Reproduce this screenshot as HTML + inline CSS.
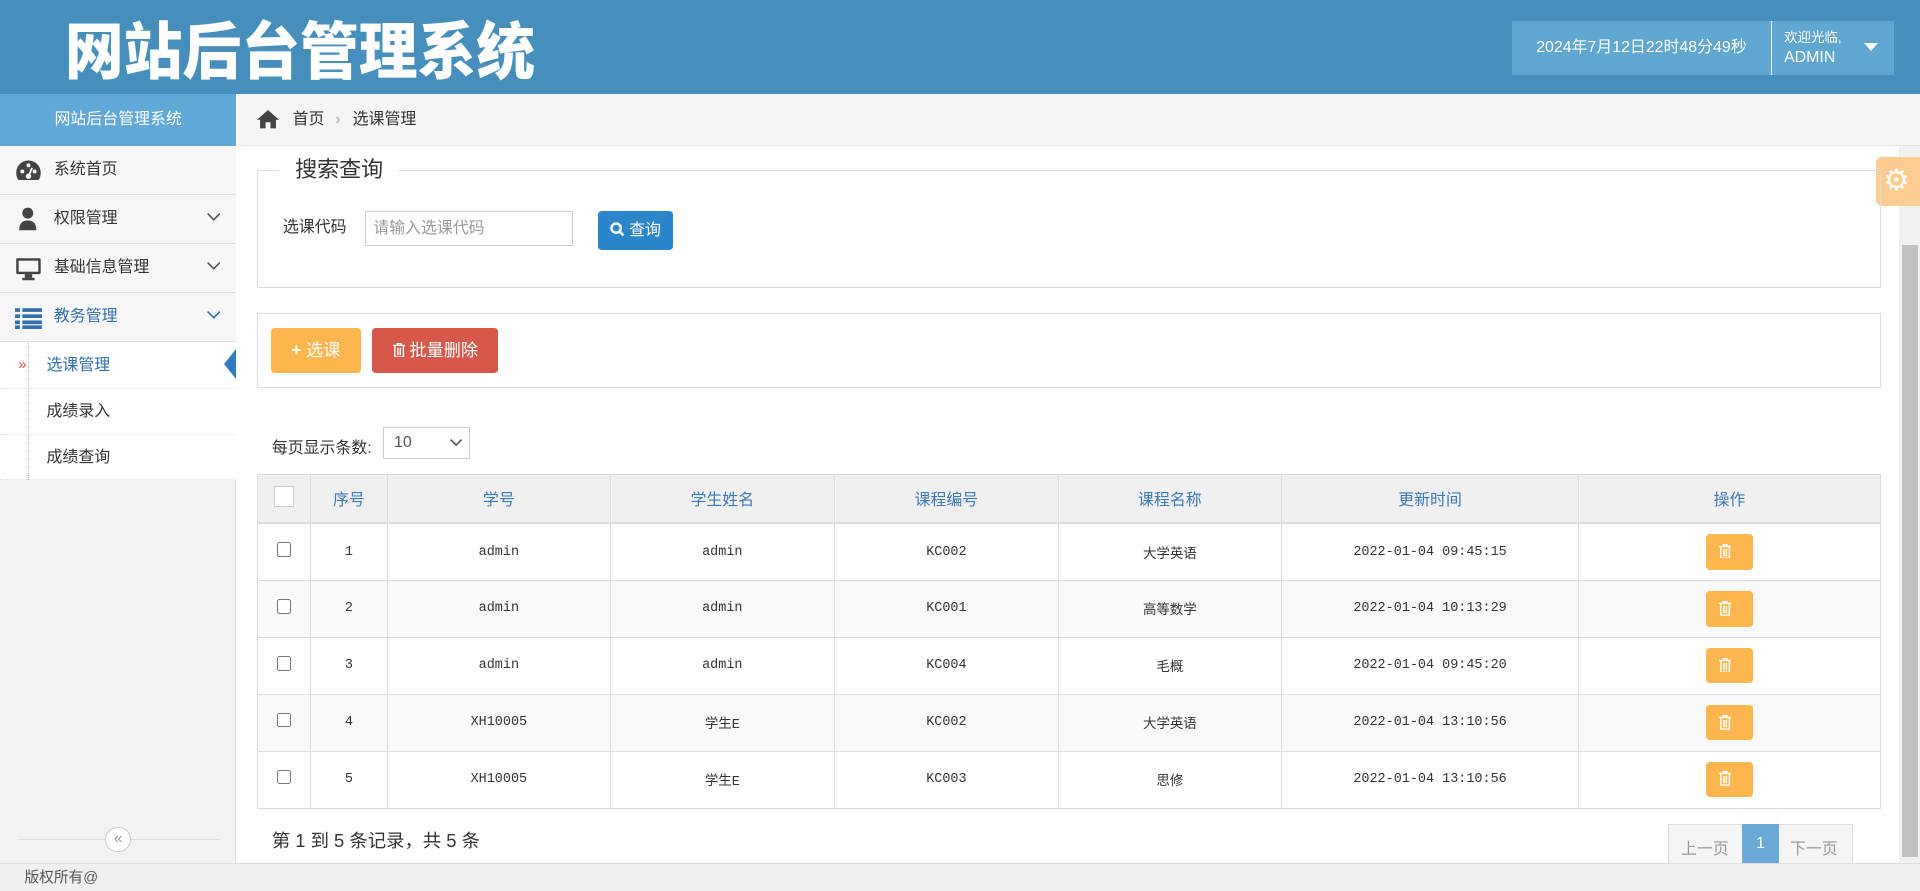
<!DOCTYPE html>
<html><head><meta charset="utf-8">
<style>
*{box-sizing:border-box;margin:0;padding:0}
html,body{width:1920px;height:891px;overflow:hidden;background:#fff}
#w{zoom:1.22449;width:1568px;height:728px;position:relative;font-family:"Liberation Sans","Noto Sans CJK SC",sans-serif;font-size:13px;color:#333}
.a{position:absolute}
.hdr{left:0;top:0;width:1568px;height:77px;background:#468fbc}
.ttl{left:53px;top:3px;font-family:"Noto Sans CJK SC",sans-serif;font-weight:900;font-size:48px;line-height:70px;color:#fff;letter-spacing:0px;transform:scaleY(1.05)}
.rb{left:1235px;top:17px;width:312px;height:44px;background:#5fa6d1;color:#fff}
.side{left:0;top:77px;width:193px;height:628px;background:#f2f2f2;border-right:1px solid #e2e2e2}
.sh{left:0;top:0;width:193px;height:42px;background:#60a8d6;color:#fff;text-align:center;line-height:42px;font-size:13px}
.mi{left:0;width:193px;height:40px;border-bottom:1px solid #e0e0e0;background:#f7f7f7;line-height:40px;padding-left:44px;font-size:13px;color:#333}
.mi svg{position:absolute;right:13px;top:15px}
.sub{left:0;width:193px;border-bottom:1px dotted #ddd;padding-left:38px;font-size:13px;color:#333}
.main{left:194px;top:77px;width:1374px;height:628px;background:#fff}
.bc{left:0;top:0;width:1374px;height:42px;background:#f5f5f5;border-bottom:1px solid #e5e5e5;line-height:42px;font-size:13px}
.box{border:1px solid #ddd}
.btn{color:#fff;border-radius:3px;text-align:center;font-size:13px}
table{border-collapse:collapse;position:absolute;left:210px;top:387px;width:1326px;table-layout:fixed}
td,th{border:1px solid #ddd;text-align:center;font-size:12px}
th{background:#f0f0f0;color:#3a78b6;font-weight:normal;height:40px;font-size:13px;border-bottom:2px solid #ddd}
td{height:46.5px;font-family:"Liberation Mono","Noto Sans CJK SC",monospace;font-size:11px;color:#333}
tr:nth-child(odd) td{background:#f9f9f9}
.cb{display:inline-block;width:12px;height:12px;border:1px solid #777;border-radius:2px;background:#fff}
.del{display:inline-block;width:38px;height:29px;background:#fdb54e;border-radius:3px;vertical-align:middle;position:relative}
.foot{left:0;top:705px;width:1568px;height:23px;background:#f0f0f0;border-top:1px solid #ddd;padding-left:20px;line-height:23px;font-size:12px;color:#555}
</style></head><body><div id="w">
<div class="a hdr"></div>
<div class="a ttl">网站后台管理系统</div>
<div class="a rb">
 <div class="a" style="left:0;top:0;width:211px;height:44px;line-height:44px;text-align:center;font-size:13px">2024年7月12日22时48分49秒</div>
 <div class="a" style="left:211px;top:0;width:1px;height:44px;background:#fff"></div>
 <div class="a" style="left:222px;top:4px;font-size:11px">欢迎光临,</div>
 <div class="a" style="left:222px;top:23px;font-size:13px">ADMIN</div>
 <div class="a" style="left:287px;top:18px;width:0;height:0;border-left:6px solid transparent;border-right:6px solid transparent;border-top:7px solid #fff"></div>
</div>

<div class="a side">
 <div class="a sh">网站后台管理系统</div>
 <div class="a mi" style="top:42px">系统首页</div>
 <div class="a mi" style="top:82px">权限管理<svg width="11" height="7" viewBox="0 0 11 7"><path d="M0.5 0.5L5.5 5.5L10.5 0.5" stroke="#555" stroke-width="1.3" fill="none"/></svg></div>
 <div class="a mi" style="top:122px">基础信息管理<svg width="11" height="7" viewBox="0 0 11 7"><path d="M0.5 0.5L5.5 5.5L10.5 0.5" stroke="#555" stroke-width="1.3" fill="none"/></svg></div>
 <div class="a mi" style="top:162px;color:#2f6fad">教务管理<svg width="11" height="7" viewBox="0 0 11 7"><path d="M0.5 0.5L5.5 5.5L10.5 0.5" stroke="#2f6fad" stroke-width="1.3" fill="none"/></svg></div>
 <svg class="a" style="left:12px;top:52px" width="22" height="20" viewBox="0 0 22 20"><path d="M11 2A10 10 0 0 0 1 12c0 3 1 5 2 6h16c1-1 2-3 2-6A10 10 0 0 0 11 2z" fill="#444"/><circle cx="6" cy="11" r="1.6" fill="#f7f7f7"/><circle cx="11" cy="6" r="1.6" fill="#f7f7f7"/><circle cx="16" cy="11" r="1.6" fill="#f7f7f7"/><circle cx="11" cy="15" r="2.2" fill="#f7f7f7"/><path d="M11 15L14 8" stroke="#f7f7f7" stroke-width="1.5"/></svg>
 <svg class="a" style="left:15px;top:92px" width="16" height="20" viewBox="0 0 16 20"><circle cx="8" cy="5" r="4.5" fill="#444"/><path d="M1 19c0-6 3-8 7-8s7 2 7 8z" fill="#444"/></svg>
 <svg class="a" style="left:12px;top:133px" width="22" height="20" viewBox="0 0 22 20"><rect x="1" y="1" width="20" height="13" rx="1" fill="#444"/><rect x="3" y="3" width="16" height="9" fill="#f7f7f7"/><rect x="8" y="14" width="6" height="3" fill="#444"/><rect x="6" y="17" width="10" height="2" fill="#444"/></svg>
 <svg class="a" style="left:12px;top:174px" width="22" height="18" viewBox="0 0 22 18"><g fill="#2f6fad"><rect x="0" y="1" width="4" height="3"/><rect x="6" y="1" width="16" height="3"/><rect x="0" y="6" width="4" height="3"/><rect x="6" y="6" width="16" height="3"/><rect x="0" y="11" width="4" height="3"/><rect x="6" y="11" width="16" height="3"/><rect x="0" y="15" width="4" height="3"/><rect x="6" y="15" width="16" height="3"/></g></svg>
 <div class="a" style="left:0;top:202px;width:193px;height:113px;background:#fff"></div>
 <div class="a" style="left:23px;top:203px;height:112px;border-left:1px dotted #bbb"></div>
 <div class="a sub" style="top:202px;height:39px;line-height:39px;color:#2f6fad">选课管理</div>
 <div class="a" style="left:15px;top:202px;line-height:39px;color:#d9534f;font-size:12px">»</div>
 <div class="a" style="left:183px;top:208px;width:0;height:0;border-top:13px solid transparent;border-bottom:13px solid transparent;border-right:10px solid #2f7cc0"></div>
 <div class="a sub" style="top:241px;height:37px;line-height:37px">成绩录入</div>
 <div class="a sub" style="top:278px;height:37px;line-height:37px">成绩查询</div>
 <div class="a" style="left:14px;top:608px;width:165px;height:1px;background:#ddd"></div>
 <div class="a" style="left:86px;top:598px;width:21px;height:21px;border-radius:50%;border:1px solid #ccc;background:#fff;text-align:center;line-height:18px;color:#999;font-size:13px">«</div>
</div>

<div class="a main">
 <div class="a bc">
  <svg class="a" style="left:16px;top:13px" width="18" height="15" viewBox="0 0 18 15"><path d="M9 0L0 8h2.5v7h4.5v-5h4v5h4.5V8H18z" fill="#444"/></svg>
  <span class="a" style="left:45px;top:0">首页</span>
  <span class="a" style="left:80px;top:0;color:#aaa">›</span>
  <span class="a" style="left:94px;top:0">选课管理</span>
 </div>
</div>

<div class="a" style="left:1551px;top:119px;width:17px;height:586px;background:#f1f1f1"></div>
<div class="a" style="left:1553px;top:200px;width:13px;height:500px;background:#c1c1c1"></div>
<div class="a" style="left:1532px;top:128px;width:36px;height:40px;background:#fcc98a;border-radius:5px 0 0 5px;opacity:.95"></div>
<div class="a" style="left:1538px;top:133px;color:#fff;font-size:24px;line-height:30px">⚙</div>

<div class="a box" style="left:210px;top:139px;width:1326px;height:96px"></div>
<div class="a" style="left:228px;top:128px;padding:0 13px;background:#fff;font-size:18px;line-height:22px;color:#333">搜索查询</div>
<div class="a" style="left:231px;top:178px;font-size:13px;line-height:16px">选课代码</div>
<div class="a" style="left:298px;top:172px;width:170px;height:29px;border:1px solid #ccc;padding-left:6px;line-height:27px;color:#999;font-size:13px">请输入选课代码</div>
<div class="a btn" style="left:488px;top:172px;width:62px;height:32px;background:#2a86c9;line-height:32px">
 <svg style="vertical-align:-2px" width="12" height="12" viewBox="0 0 12 12"><circle cx="5" cy="5" r="3.8" stroke="#fff" stroke-width="2" fill="none"/><path d="M7.5 7.5L11 11" stroke="#fff" stroke-width="2.2"/></svg> 查询</div>

<div class="a box" style="left:210px;top:256px;width:1326px;height:61px"></div>
<div class="a btn" style="left:221px;top:268px;width:74px;height:37px;background:#fdb54e;line-height:37px;font-size:14px"><b>+</b> 选课</div>
<div class="a btn" style="left:304px;top:268px;width:103px;height:37px;background:#d5584a;line-height:37px;font-size:14px">
 <svg style="vertical-align:-1px" width="10" height="12" viewBox="0 0 10 12"><path d="M0 2h10M3.5 2V0.5h3V2M1.5 2.5v9h7v-9M4 4v6M6 4v6" stroke="#fff" stroke-width="1.2" fill="none"/></svg> 批量删除</div>

<div class="a" style="left:222px;top:355px;font-size:13px">每页显示条数:</div>
<div class="a" style="left:313px;top:349px;width:71px;height:26px;border:1px solid #ccc;line-height:24px;padding-left:8px;color:#555">10<svg class="a" style="right:6px;top:9px" width="10" height="6" viewBox="0 0 10 6"><path d="M0.5 0.5L5 5L9.5 0.5" stroke="#555" stroke-width="1.3" fill="none"/></svg></div>

<table>
<colgroup><col style="width:43px"><col style="width:63px"><col style="width:182px"><col style="width:183px"><col style="width:183px"><col style="width:182px"><col style="width:243px"><col></colgroup>
<tr><th><span class="cb" style="width:17px;height:17px;border-color:#ccc;border-radius:0"></span></th><th>序号</th><th>学号</th><th>学生姓名</th><th>课程编号</th><th>课程名称</th><th>更新时间</th><th>操作</th></tr>
<tr><td><span class="cb"></span></td><td>1</td><td>admin</td><td>admin</td><td>KC002</td><td>大学英语</td><td>2022-01-04 09:45:15</td><td><span class="del"></span></td></tr>
<tr><td><span class="cb"></span></td><td>2</td><td>admin</td><td>admin</td><td>KC001</td><td>高等数学</td><td>2022-01-04 10:13:29</td><td><span class="del"></span></td></tr>
<tr><td><span class="cb"></span></td><td>3</td><td>admin</td><td>admin</td><td>KC004</td><td>毛概</td><td>2022-01-04 09:45:20</td><td><span class="del"></span></td></tr>
<tr><td><span class="cb"></span></td><td>4</td><td>XH10005</td><td>学生E</td><td>KC002</td><td>大学英语</td><td>2022-01-04 13:10:56</td><td><span class="del"></span></td></tr>
<tr><td><span class="cb"></span></td><td>5</td><td>XH10005</td><td>学生E</td><td>KC003</td><td>思修</td><td>2022-01-04 13:10:56</td><td><span class="del"></span></td></tr>
</table>
<svg class="a" style="left:1404px;top:444px" width="10" height="12" viewBox="0 0 10 12"><path d="M0 2h10M3.5 2V0.5h3V2M1.5 2.5v9h7v-9M4 4v6M6 4v6" stroke="#fff" stroke-width="1.2" fill="none"/></svg>
<svg class="a" style="left:1404px;top:491px" width="10" height="12" viewBox="0 0 10 12"><path d="M0 2h10M3.5 2V0.5h3V2M1.5 2.5v9h7v-9M4 4v6M6 4v6" stroke="#fff" stroke-width="1.2" fill="none"/></svg>
<svg class="a" style="left:1404px;top:537px" width="10" height="12" viewBox="0 0 10 12"><path d="M0 2h10M3.5 2V0.5h3V2M1.5 2.5v9h7v-9M4 4v6M6 4v6" stroke="#fff" stroke-width="1.2" fill="none"/></svg>
<svg class="a" style="left:1404px;top:584px" width="10" height="12" viewBox="0 0 10 12"><path d="M0 2h10M3.5 2V0.5h3V2M1.5 2.5v9h7v-9M4 4v6M6 4v6" stroke="#fff" stroke-width="1.2" fill="none"/></svg>
<svg class="a" style="left:1404px;top:630px" width="10" height="12" viewBox="0 0 10 12"><path d="M0 2h10M3.5 2V0.5h3V2M1.5 2.5v9h7v-9M4 4v6M6 4v6" stroke="#fff" stroke-width="1.2" fill="none"/></svg>

<div class="a" style="left:222px;top:675px;font-size:15px;color:#333">第 1 到 5 条记录，共 5 条</div>
<div class="a" style="left:1362px;top:673px;width:151px;height:33px;border:1px solid #ddd;background:#f5f5f5;font-size:13px;color:#999">
 <span class="a" style="left:10px;top:9px">上一页</span>
 <span class="a" style="left:60px;top:-1px;width:30px;height:33px;background:#6aa9d6;color:#fff;text-align:center;line-height:33px">1</span>
 <span class="a" style="left:99px;top:9px">下一页</span>
</div>

<div class="a foot">版权所有@</div>
</div></body></html>
